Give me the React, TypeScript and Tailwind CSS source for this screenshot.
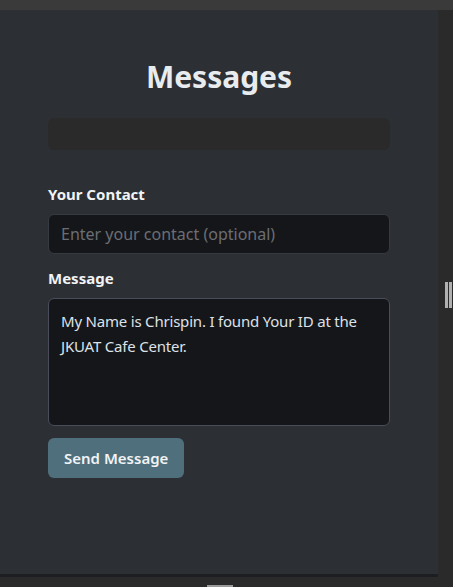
import React, { useState } from 'react';

const font = { fontFamily: '"Noto Sans", "Open Sans", sans-serif' };

export default function App() {
  const [contact, setContact] = useState('');
  const [message, setMessage] = useState(
    'My Name is Chrispin. I found Your ID at the JKUAT Cafe Center.'
  );

  return (
    <div className="flex h-[587px] w-[453px] flex-col overflow-hidden bg-[#2a2a2a]" style={font}>
      {/* Window top bar */}
      <div className="h-[10px] w-full shrink-0 bg-[#3a3a3a]" />

      <div className="flex flex-1">
        <div className="flex w-[438px] flex-col">
          {/* Main panel */}
          <div className="h-[564px] bg-[#2c2f34] px-[48px] pt-[49px]">
            <h1 className="text-center text-[30px] font-bold leading-[36px] text-[#e9ecef]">Messages</h1>

            <div className="mt-[23px] h-[32px] rounded-md bg-[#2a2a2b]" />

            <label className="mt-[34px] block text-[15px] font-bold leading-[20px] text-[#f1f3f5]">
              Your Contact
            </label>
            <input
              value={contact}
              onChange={(e) => setContact(e.target.value)}
              placeholder="Enter your contact (optional)"
              className="mt-[10px] block h-[40px] w-full rounded-md border border-[#373a41] bg-[#15161a] px-[12px] text-[16px] text-[#dee2e6] outline-none placeholder:text-[#6b6e74]"
            />

            <label className="mt-[14px] block text-[15px] font-bold leading-[20px] text-[#f1f3f5]">
              Message
            </label>
            <textarea
              value={message}
              onChange={(e) => setMessage(e.target.value)}
              className="mt-[10px] block h-[128px] w-full resize-none rounded-md border border-[#4a4d59] bg-[#15161a] px-[12px] py-[10px] text-[15px] leading-[25px] tracking-[-0.2px] text-[#dee2e6] outline-none"
            />

            <button className="mt-[12px] h-[40px] rounded-md bg-[#4f6f7c] px-[16px] text-[15px] font-semibold text-[#f1f3f5]">
              Send Message
            </button>
          </div>
          <div className="h-[3px] bg-[#1c1e22]" />
          <div className="relative flex-1">
            <div className="absolute bottom-0 left-[207px] h-[2px] w-[26px] bg-[#9a9a9a]" />
          </div>
        </div>

        {/* Right strip with resize handle */}
        <div className="flex w-[15px] flex-col pt-[272px]">
          <div className="flex h-[26px] gap-[1px] pl-[7px]">
            <div className="w-[3px] bg-[#b0b0b0]" />
            <div className="w-[3px] bg-[#b0b0b0]" />
          </div>
        </div>
      </div>
    </div>
  );
}
